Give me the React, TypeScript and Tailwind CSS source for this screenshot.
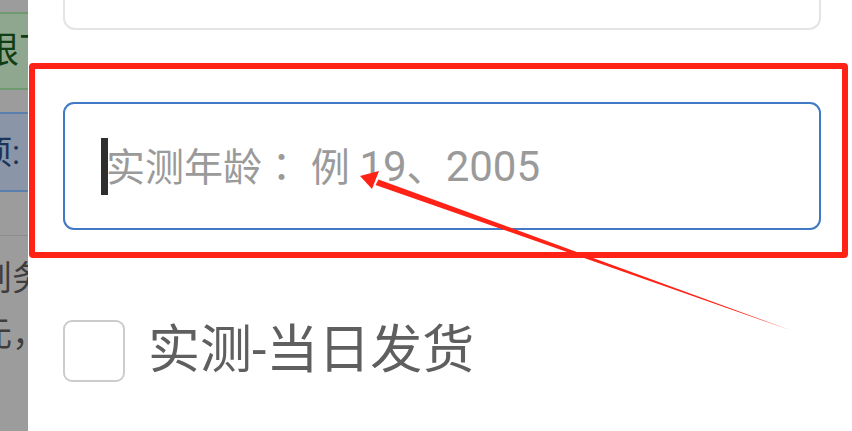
import React from "react";

const font = { fontFamily: "Roboto, 'Noto Sans CJK SC', sans-serif" };

function Backdrop() {
    // page behind the drawer, dimmed by the overlay
    return (
        <div className="w-[28px] shrink-0 overflow-hidden bg-[#9c9c9c] flex flex-col">
            <div className="mt-[12px] h-[78px] w-[200px] border-y-2 border-[#6f9a6f] bg-[#8fa68f] flex items-center">
                <span className="-ml-[53px] whitespace-nowrap text-[36px] leading-none text-[#113d12]">权限下载</span>
            </div>
            <div className="mt-[22px] h-[80px] w-[200px] border-y-2 border-[#5b7fad] bg-[#8a96a8] flex items-center">
                <span className="-ml-[54px] whitespace-nowrap text-[33px] leading-none text-[#1b3459]">选项: 全部</span>
            </div>
            <div className="mt-[43px] h-px w-full bg-[#8c8c8c]" />
            <div className="mt-[24px] w-[200px] flex flex-col gap-[20px] text-[34px] leading-[36px] text-[#3d3d3d]">
                <span className="-ml-[56px] whitespace-nowrap">计划务</span>
                <span className="-ml-[22px] whitespace-nowrap">元，</span>
            </div>
        </div>
    );
}

export default function App() {
    return (
        <div className="relative flex h-[431px] w-[852px] overflow-hidden bg-white" style={font}>
            <Backdrop />

            <div className="flex-1 pl-[35px] pr-[31px]">
                <div className="-mt-[30px] h-[60px] rounded-[12px] border-2 border-[#e4e4e4]" />

                <div className="mt-[72px] h-[128px] rounded-[11px] border-[2.5px] border-[#4079c6] flex items-center pl-[36px]">
                    <span className="h-[57px] w-[7px] shrink-0 bg-[#2e2e2e]" />
                    <span className="-ml-[2px] whitespace-pre text-[39px] leading-none text-[#9a9a9a]">
                        实测年龄<span className="font-['Noto_Sans_CJK_JP']">：</span> 例 <span className="text-[42px]">19</span>、<span className="text-[42px]">2005</span>
                    </span>
                </div>

                <div className="mt-[90px] flex items-center gap-[23px]">
                    <span className="h-[62px] w-[62px] shrink-0 rounded-[9px] border-[2.5px] border-[#cccccc] bg-white" />
                    <span className="text-[52px] leading-none text-[#5f5f5f]">实测-当日发货</span>
                </div>
            </div>

            {/* annotation: red frame + arrow */}
            <div className="pointer-events-none absolute left-[29px] top-[63px] h-[195px] w-[819px] rounded-[4px] border-[6px] border-[#ff2216]" />
            <svg className="pointer-events-none absolute left-0 top-0" width="852" height="431" viewBox="0 0 852 431">
                <polygon points="375.5,185 378.5,179.5 790,330" fill="#ff2216" />
                <polygon points="360,176 379,171 372,189" fill="#ff2216" />
            </svg>
        </div>
    );
}
